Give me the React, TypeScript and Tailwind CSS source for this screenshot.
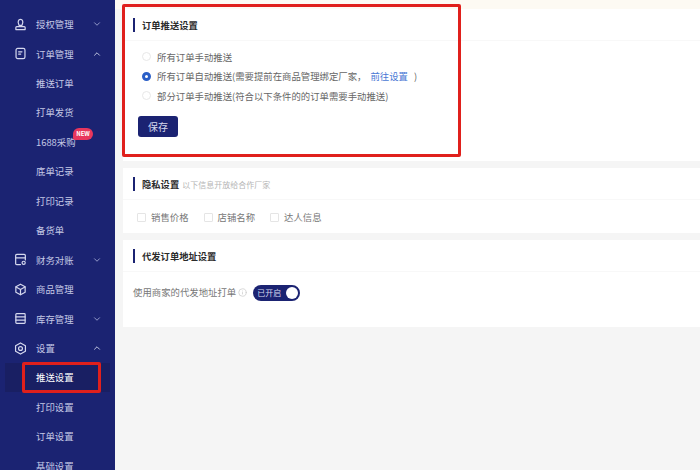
import { ChevronDown, ChevronUp, Info } from "lucide-react";

const font = "font-['Noto_Sans_CJK_SC','Liberation_Sans',sans-serif]";

type IconProps = { className?: string };

function Svg({ className, children }: IconProps & { children: React.ReactNode }) {
  return (
    <svg viewBox="0 0 14 14" width="13" height="13" fill="none" stroke="currentColor" strokeWidth="1.3" strokeLinejoin="round" strokeLinecap="round" className={className}>
      {children}
    </svg>
  );
}

const AuthIcon = ({ className }: IconProps) => (
  <Svg className={className}>
    <path d="M5 6.5 C4 4.5 4.5 1.5 7 1.5 C9.5 1.5 10 4.5 9 6.5 L8.6 8 H5.4 Z" />
    <path d="M2 12.5 V10.2 Q2 9.2 3 9.2 H11 Q12 9.2 12 10.2 V12.5 Z" />
  </Svg>
);
const OrderIcon = ({ className }: IconProps) => (
  <Svg className={className}>
    <rect x="2.2" y="1.5" width="9.6" height="11" rx="1.8" />
    <path d="M5 5.2 H8.6 M5 7.6 H7.2" />
  </Svg>
);
const FinanceIcon = ({ className }: IconProps) => (
  <Svg className={className}>
    <path d="M7 12.5 H3 Q1.8 12.5 1.8 11.3 V2.7 Q1.8 1.5 3 1.5 H11 Q12.2 1.5 12.2 2.7 V7.5" />
    <path d="M1.8 5.2 H12.2" />
    <circle cx="10.4" cy="10.6" r="1.7" />
  </Svg>
);
const GoodsIcon = ({ className }: IconProps) => (
  <Svg className={className}>
    <path d="M7 1.3 L12 4 V10 L7 12.7 L2 10 V4 Z" />
    <path d="M2.2 4.2 L7 7 L11.8 4.2 M7 7 V12.5" />
  </Svg>
);
const StockIcon = ({ className }: IconProps) => (
  <Svg className={className}>
    <rect x="2" y="1.8" width="10" height="10.4" rx="0.8" />
    <path d="M2 5.3 H12 M2 8.7 H12" />
  </Svg>
);
const SettingIcon = ({ className }: IconProps) => (
  <Svg className={className}>
    <path d="M7 1 L12.3 4 V10 L7 13 L1.7 10 V4 Z" />
    <circle cx="7" cy="7" r="2.1" />
  </Svg>
);

const menu = [
  { label: "授权管理", icon: AuthIcon, arrow: "down" },
  { label: "订单管理", icon: OrderIcon, arrow: "up" },
  { label: "推送订单" },
  { label: "打单发货" },
  { label: "1688采购", badge: true },
  { label: "底单记录" },
  { label: "打印记录" },
  { label: "备货单" },
  { label: "财务对账", icon: FinanceIcon, arrow: "down" },
  { label: "商品管理", icon: GoodsIcon },
  { label: "库存管理", icon: StockIcon, arrow: "down" },
  { label: "设置", icon: SettingIcon, arrow: "up" },
  { label: "推送设置", active: true },
  { label: "打印设置" },
  { label: "订单设置" },
  { label: "基础设置" },
];

function Sidebar() {
  return (
    <div className="w-[115px] h-full shrink-0 bg-[#1b2372] pt-[9.5px] overflow-hidden">
      {menu.map((item) => {
        const Icon = item.icon;
        return (
          <div
            key={item.label}
            className={`relative flex items-center h-[29.45px] text-[9.4px] text-[#c5c9e6] ${item.active ? "ml-[5px] mr-[5px] pl-[31px] bg-[#191f63] text-white" : Icon ? "pl-[14px]" : "pl-[36px]"}`}
          >
            {Icon && <Icon className="mr-[9px] text-[#d5d8ee]" />}
            <span>{item.label}</span>
            {item.badge && (
              <span className="absolute left-[73px] top-[1px] h-[12px] w-[20px] rounded-[6px] rounded-bl-[2px] bg-[#e8365d] text-white text-[6px] font-bold leading-[12px] text-center">
                NEW
              </span>
            )}
            {item.arrow === "down" && <ChevronDown size={10} strokeWidth={2} className="absolute left-[92px] text-[#aab0da]" />}
            {item.arrow === "up" && <ChevronUp size={10} strokeWidth={2} className="absolute left-[92px] text-[#dfe2f4]" />}
          </div>
        );
      })}
    </div>
  );
}

function CardTitle({ title, note }: { title: string; note?: string }) {
  return (
    <div className="flex items-center h-[32px] pl-[10px] border-b border-[#f8f8f8]">
      <div className="w-[2px] h-[14px] bg-[#1b2372] mr-[7px]" />
      <span className="pt-[2px] text-[9.3px] font-bold text-[#2a2a2a]">{title}</span>
      {note && <span className="pt-[2px] ml-[3px] text-[8px] text-[#b5b5b5]">{note}</span>}
    </div>
  );
}

function Radio({ checked, children }: { checked?: boolean; children: React.ReactNode }) {
  return (
    <div className="flex items-center h-[19.5px] text-[9.4px] text-[#666]">
      {checked ? (
        <span className="w-[9px] h-[9px] rounded-full border-[3px] border-[#2b5fc7] bg-white mr-[6px] shrink-0" />
      ) : (
        <span className="w-[9px] h-[9px] rounded-full border border-[#e8e8e8] bg-white mr-[6px] shrink-0" />
      )}
      {children}
    </div>
  );
}

function Check({ label }: { label: string }) {
  return (
    <div className="flex items-center text-[9.4px] text-[#777] mr-[15px]">
      <span className="w-[9px] h-[9px] border border-[#e5e5e5] rounded-[1px] mr-[5px]" />
      {label}
    </div>
  );
}

export default function App() {
  return (
    <div className={`relative flex w-[700px] h-[470px] overflow-hidden bg-[#f5f5f5] ${font}`}>
      <Sidebar />
      <div className="flex-1 min-w-0 pl-[8px]">
        <div className="h-[9px] -ml-[8px] bg-[#fdfaf3]" />
        <div className="bg-white h-[152px]">
          <CardTitle title="订单推送设置" />
          <div className="pl-[19px] pt-[6px]">
            <Radio>所有订单手动推送</Radio>
            <Radio checked>
              所有订单自动推送(需要提前在商品管理绑定厂家，
              <span className="text-[#4a77d4] ml-[4px] mr-[6px]">前往设置</span>)
            </Radio>
            <Radio>部分订单手动推送(符合以下条件的的订单需要手动推送)</Radio>
            <button className="block mt-[10px] -ml-[4px] w-[40px] h-[21px] rounded-[3px] bg-[#1b2372] text-[#d5d8ee] text-[10px]">保存</button>
          </div>
        </div>
        <div className="mt-[7px] bg-white h-[65px]">
          <CardTitle title="隐私设置" note="以下信息开放给合作厂家" />
          <div className="flex items-center pl-[14px] pt-[2px] h-[33px]">
            <Check label="销售价格" />
            <Check label="店铺名称" />
            <Check label="达人信息" />
          </div>
        </div>
        <div className="mt-[7px] bg-white h-[87px]">
          <CardTitle title="代发订单地址设置" />
          <div className="flex items-center pl-[10px] h-[41px] text-[9.4px] text-[#777]">
            使用商家的代发地址打单
            <Info size={9} className="ml-[2px] text-[#ccc]" />
            <div className="ml-[6px] flex items-center justify-between w-[47px] h-[16px] rounded-full bg-[#1b2372] pl-[4px] pr-[2px] text-[8px] text-[#d5d8ee]">
              已开启
              <span className="w-[12px] h-[12px] rounded-full bg-white" />
            </div>
          </div>
        </div>
      </div>
      {/* red annotation boxes */}
      <div className="absolute left-[122px] top-[4px] w-[339px] h-[153px] border-[3px] border-[#e0201c] rounded-[2px]" />
      <div className="absolute left-[22px] top-[362px] w-[79px] h-[31px] border-[3px] border-[#e0201c] rounded-[2px]" />
    </div>
  );
}
